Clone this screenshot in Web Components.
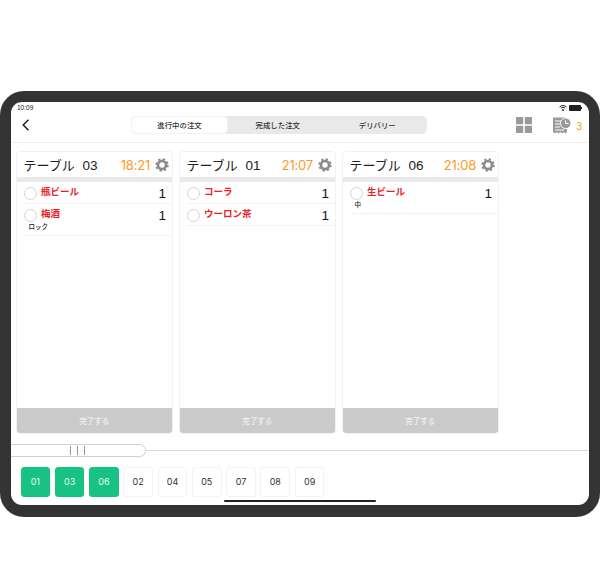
<!DOCTYPE html>
<html lang="ja">
<head>
<meta charset="utf-8">
<title>注文</title>
<style>
  html, body { margin: 0; background: #fff; }
  body { font-family: "Noto Sans CJK JP", "Noto Sans", sans-serif; width: 600px; height: 569px; overflow: hidden; padding-top: 91px; box-sizing: border-box; }
</style>
</head>
<body>
<tablet-frame>
  <status-bar></status-bar>
  <top-nav></top-nav>
  <card-list>
    <order-card table="03" time="18:21">
      <order-row name="瓶ビール" qty="1"></order-row>
      <order-row name="梅酒" qty="1" note="ロック"></order-row>
    </order-card>
    <order-card table="01" time="21:07">
      <order-row name="コーラ" qty="1"></order-row>
      <order-row name="ウーロン茶" qty="1"></order-row>
    </order-card>
    <order-card table="06" time="21:08">
      <order-row name="生ビール" qty="1" note="中"></order-row>
    </order-card>
  </card-list>
  <drag-slider></drag-slider>
  <table-tabs active="01,03,06" others="02,04,05,07,08,09"></table-tabs>
  <home-bar></home-bar>
</tablet-frame>

<script>
// Little helper so each element just gives its html
class Base extends HTMLElement {
  constructor() {
    super();
    this.attachShadow({ mode: 'open' });
  }
  connectedCallback() {
    this.shadowRoot.innerHTML = this.render();
  }
}

class TabletFrame extends Base {
  render() {
    return `
      <style>
        :host { display: block; box-sizing: border-box; width: 600px; height: 426px; background: #333; border-radius: 24px; padding: 11px 11px 12px; }
        .screen { height: 100%; background: #fff; border-radius: 11px; overflow: hidden; display: flex; flex-direction: column; }
      </style>
      <div class="screen"><slot></slot></div>`;
  }
}

class StatusBar extends Base {
  render() {
    return `
      <style>
        :host { display: flex; justify-content: space-between; align-items: center; box-sizing: border-box; height: 11px; padding: 0 7px 0 6px; font: 500 6.5px "Liberation Sans", sans-serif; color: #222; }
        .right { display: flex; align-items: center; gap: 2px; }
      </style>
      <span>10:09</span>
      <span class="right">
        <svg width="8" height="6" viewBox="0 0 8 6"><path d="M.5 2A5 5 0 0 1 7.500 2M1.800 3.200A3.200 3.200 0 0 1 6.200 3.200" fill="none" stroke="#222" stroke-width="1"/><circle cx="4" cy="5" r="1" fill="#222"/></svg>
        <svg width="13" height="6" viewBox="0 0 13 6"><rect width="12" height="6" rx="1" fill="#222"/><rect x="12" y="2" width="1" height="2" fill="#222"/></svg>
      </span>`;
  }
}

class TopNav extends Base {
  render() {
    return `
      <style>
        :host { display: flex; align-items: center; box-sizing: border-box; height: 30px; padding: 0 7px 6px 11px; border-bottom: 1px solid #f0f0f0; }
        .back { width: 109px; display: flex; }
        .seg { display: flex; width: 296px; height: 18px; background: #e9e9e9; border-radius: 5px; font-size: 7.400px; font-weight: 500; color: #333; }
        .seg span { flex: 1; display: flex; align-items: center; justify-content: center; }
        .seg .on { flex: none; width: 97px; box-sizing: border-box; background: #fff; border: 1px solid #f3f3f3; border-radius: 5px; }
        .icons { margin-left: auto; display: flex; align-items: center; gap: 21px; }
        .rec { display: flex; align-items: center; gap: 5px; color: #ff9a1f; font: 10px "Liberation Sans", sans-serif; }
        .rec svg { margin-top: 1px; }
        .rec b { font-weight: 400; margin-top: 3px; }
      </style>
      <span class="back">
        <svg width="8" height="12" viewBox="0 0 8 12"><path d="M6.500 .8 1.200 6l5.300 5.200" fill="none" stroke="#111" stroke-width="1.300"/></svg>
      </span>
      <div class="seg"><span class="on">進行中の注文</span><span>完成した注文</span><span>デリバリー</span></div>
      <div class="icons">
        <svg width="16" height="16" viewBox="0 0 16 16" fill="#999"><rect width="7.200" height="7.200" rx=".8"/><rect x="8.800" width="7.200" height="7.200" rx=".8"/><rect y="8.800" width="7.200" height="7.200" rx=".8"/><rect x="8.800" y="8.800" width="7.200" height="7.200" rx=".8"/></svg>
        <span class="rec">
          <svg width="18" height="17" viewBox="0 0 18 17"><path d="M0 .5H13V12H14V15L12.500 16.500 10.700 15 9 16.500 7.200 15 5.500 16.500 3.700 15 2 16.500 0 15Z" fill="#999"/><path d="M2 4H8.500M2 7H7M2 10H7M2 13H11" stroke="#fff" stroke-width="1"/><circle cx="12.700" cy="6.300" r="5.300" fill="#999" stroke="#fff" stroke-width="1"/><path d="M12.700 3.300V6.500H15.500" fill="none" stroke="#fff" stroke-width="1"/></svg>
          <b>3</b>
        </span>
      </div>`;
  }
}

class CardList extends Base {
  render() {
    return `
      <style>
        :host { display: flex; gap: 5.500px; height: 283px; padding: 8px 0 0 4.500px; }
        ::slotted(*) { flex: none; }
      </style>
      <slot></slot>`;
  }
}

const GEAR = `<svg width="14" height="14" viewBox="0 0 14 14"><circle cx="7" cy="7" r="4" fill="none" stroke="#8a8a8a" stroke-width="2.600"/><circle cx="7" cy="7" r="5.800" fill="none" stroke="#8a8a8a" stroke-width="1.800" stroke-dasharray="2.300 2.255"/></svg>`;

class OrderCard extends Base {
  render() {
    return `
      <style>
        :host { display: flex; flex-direction: column; box-sizing: border-box; width: 157.500px; height: 283px; border: 1px solid #f2f2f2; border-radius: 4px; overflow: hidden; background: #fff; }
        header { display: flex; align-items: center; height: 25px; padding: 0 3px 0 7px; flex: none; }
        .title { font-size: 13px; color: #222; white-space: pre; }
        .num { font-family: "Liberation Sans", sans-serif; font-size: 13.500px; margin-left: 2px; }
        .time { margin-left: auto; margin-right: 5px; font: 400 13px Inter, sans-serif; letter-spacing: -.2px; color: #ff9a1f; }
        .band { height: 5px; background: #e9e9e9; flex: none; }
        .rows { flex: 1; padding-left: 7px; }
        button { height: 25px; flex: none; border: 0; background: #cbcbcb; color: #f0f0f0; font: 500 7.500px "Noto Sans CJK JP", sans-serif; }
      </style>
      <header><span class="title">テーブル  <span class="num">${this.getAttribute('table')}</span></span><span class="time">${this.getAttribute('time')}</span>${GEAR}</header>
      <div class="band"></div>
      <div class="rows"><slot></slot></div>
      <button>完了する</button>`;
  }
}

class OrderRow extends Base {
  render() {
    const note = this.getAttribute('note');
    return `
      <style>
        :host { display: block; border-bottom: 1px solid #f3f3f3; }
        .main { display: flex; align-items: flex-start; height: 21px; box-sizing: border-box; }
        .dot { flex: none; width: 13px; height: 13px; box-sizing: border-box; margin-top: 5px; border: 1px solid #d5d5d5; border-radius: 50%; }
        .name { margin: 2px 0 0 4.500px; font-size: 9.500px; font-weight: 700; line-height: 14px; color: #f01c24; }
        .qty { margin: 4px 6px 0 auto; font: 13.500px/15px "Liberation Sans", sans-serif; color: #111; }
        .note { margin: -3px 0 0 5px; height: 13px; font-size: 6.500px; font-weight: 500; line-height: 8px; color: #222; }
      </style>
      <div class="main"><span class="dot"></span><span class="name">${this.getAttribute('name')}</span><span class="qty">${this.getAttribute('qty')}</span></div>
      ${note ? `<div class="note">${note}</div>` : ''}`;
  }
}

class DragSlider extends Base {
  render() {
    return `
      <style>
        :host { display: flex; align-items: center; height: 13px; margin-top: 10px; }
        .handle { flex: none; box-sizing: border-box; width: 135px; height: 13px; border: 1px solid #d0d0d0; border-left: 0; border-radius: 0 7px 7px 0; display: flex; justify-content: center; align-items: center; gap: 6px; padding-right: 2px; }
        .handle i { width: 1px; height: 9px; background: #999; }
        .line { flex: 1; height: 1.500px; background: #dcdcdc; }
      </style>
      <div class="handle"><i></i><i></i><i></i></div><div class="line"></div>`;
  }
}

class TableTabs extends Base {
  render() {
    const tab = (n, on) => `<span class="tab ${on ? 'on' : ''}">${n}</span>`;
    const active = this.getAttribute('active').split(',').map(n => tab(n, true));
    const others = this.getAttribute('others').split(',').map(n => tab(n, false));
    return `
      <style>
        :host { display: flex; gap: 4.600px; padding: 9.500px 0 0 9.500px; }
        .tab { box-sizing: border-box; width: 29.700px; height: 30px; display: flex; align-items: center; justify-content: center; border: 1px solid #f3f3f3; border-radius: 3px; font: 9px Inter, sans-serif; color: #333; }
        .on { background: #18c284; border-color: #18c284; color: #e8f8f1; }
      </style>
      ${active.join('')}${others.join('')}`;
  }
}

class HomeBar extends Base {
  render() {
    return `
      <style>
        :host { display: flex; justify-content: center; padding-top: 3px; }
        i { width: 152px; height: 2px; background: #222; border-radius: 1px; }
      </style>
      <i></i>`;
  }
}

customElements.define('tablet-frame', TabletFrame);
customElements.define('status-bar', StatusBar);
customElements.define('top-nav', TopNav);
customElements.define('card-list', CardList);
customElements.define('order-card', OrderCard);
customElements.define('order-row', OrderRow);
customElements.define('drag-slider', DragSlider);
customElements.define('table-tabs', TableTabs);
customElements.define('home-bar', HomeBar);
</script>
</body>
</html>
